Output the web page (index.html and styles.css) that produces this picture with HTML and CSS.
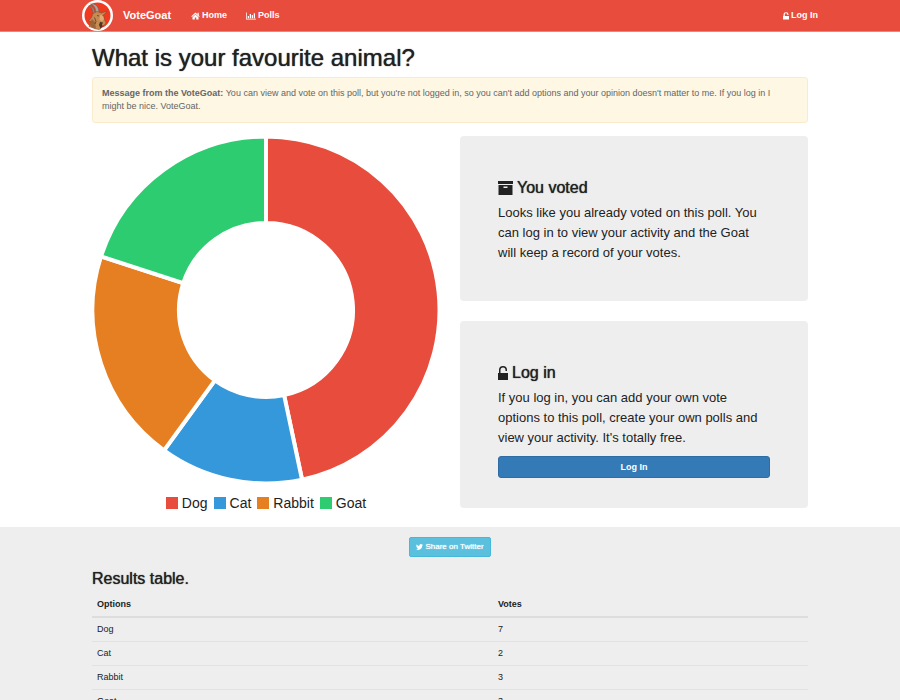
FILE: index.html
```html
<!DOCTYPE html>
<html lang="en">
<head>
<meta charset="utf-8">
<meta name="viewport" content="width=device-width, initial-scale=1">
<title>VoteGoat</title>
<link rel="stylesheet" href="styles.css">
</head>
<body>
<header class="navbar">
  <nav class="navbar-inner">
    <a class="brand" href="#">
      <svg class="logo" viewBox="0 0 62 62" aria-hidden="true">
        <circle cx="31" cy="31" r="28.5" fill="#f0391f" stroke="#fff" stroke-width="5"/>
        <path d="M26 26C25 16 20 11 13 12c7 2 8 8 10 17z" fill="#8d8a80" stroke="#6b5a4c"/>
        <path d="M34 24C33 12 27 7 17 8c8 3 10 8 11 17z" fill="#aaa698" stroke="#6b5a4c"/>
        <path d="M22 27l8-4 9 3 11-4-7 9 2 8 3 7-4 5-5 1-2 6-3 1-6-1-14-5 5-10-6-1 6-7z" fill="#c68a52" stroke="#7a4a2c"/>
        <path d="M15 49l5-11 6 6 2 13c-5 0-10-3-13-8z" fill="#9c6538"/>
        <path d="M36 31l5-2 3 9-4 5-5-4z" fill="#e0ab72"/>
        <path d="M36 44l6 1-2 4 1 4-4 4-3-7z" fill="#4d3328"/>
        <path d="M30 31l4 1M41 31l2-1M25 35l3 8-2 5" fill="none" stroke="#4d3328" stroke-width="1.500"/>
      </svg>
      <span>VoteGoat</span>
    </a>
    <a class="nav-link" href="#">
      <svg class="icon" viewBox="0 0 18 16" fill="currentColor" aria-hidden="true"><path d="M9 1l8.500 7.500-1.500 1.700L9 4 2 10.200.500 8.500z"/><path d="M13 1.500h2.500v5.500L13 4.500zM9 5l6 5.500V15h-4.500v-4h-3v4H3v-4.500z"/></svg>
      Home</a>
    <a class="nav-link" href="#">
      <svg class="icon icon-chart" viewBox="0 0 20 16" fill="currentColor" aria-hidden="true"><path d="M0 1h1.500v12.500H20V15H0zM3.500 8H6v4.500H3.500zM7.500 4H10v8.500H7.500zM11.500 6H14v6.500h-2.500zM15.500 2.500H18v10h-2.500z"/></svg>
      Polls</a>
    <a class="nav-link nav-login" href="#">
      <svg class="icon icon-lock" viewBox="0 0 12 16" fill="currentColor" aria-hidden="true"><path d="M1 8V5a5 4.500 0 0 1 10 0v1H8.500V5a2.500 2.500 0 0 0-5 0v3H12v7H0V8z"/></svg>
      Log In</a>
  </nav>
</header>

<main>
  <div class="container poll">
    <h1>What is your favourite animal?</h1>
    <p class="alert"><strong>Message from the VoteGoat:</strong> You can view and vote on this poll, but you're not logged in, so you can't add options and your opinion doesn't matter to me. If you log in I might be nice. VoteGoat.</p>
    <div class="columns">
      <figure class="chart">
        <svg class="donut" viewBox="0 0 348 348" role="img" aria-label="Poll results">
          <g stroke="#fff" stroke-width="4">
            <path fill="#e74c3c" d="M174 0.500A173.500 173.500 0 0 1 210.070 343.710L192.090 259.100A87 87 0 0 0 174 87z"/>
            <path fill="#3498db" d="M210.070 343.710A173.500 173.500 0 0 1 72.020 314.360L122.860 244.380A87 87 0 0 0 192.090 259.100z"/>
            <path fill="#e67e22" d="M72.020 314.360A173.500 173.500 0 0 1 8.990 120.390L91.260 147.120A87 87 0 0 0 122.860 244.380z"/>
            <path fill="#2ecc71" d="M8.990 120.390A173.500 173.500 0 0 1 174 0.500L174 87A87 87 0 0 0 91.260 147.120z"/>
          </g>
        </svg>
        <figcaption>
          <ul class="legend">
            <li><span class="swatch dog"></span>Dog</li>
            <li><span class="swatch cat"></span>Cat</li>
            <li><span class="swatch rabbit"></span>Rabbit</li>
            <li><span class="swatch goat"></span>Goat</li>
          </ul>
        </figcaption>
      </figure>
      <div class="side">
        <section class="panel">
          <h2><svg class="panel-icon" viewBox="0 0 15 14" fill="currentColor" aria-hidden="true"><path d="M0 0h15v3H0z"/><path fill-rule="evenodd" d="M0.500 4h14v10h-14zM5.500 5.500v1.500h4V5.500z"/></svg>You voted</h2>
          <p>Looks like you already voted on this poll. You can log in to view your activity and the Goat will keep a record of your votes.</p>
        </section>
        <section class="panel">
          <h2><svg class="panel-icon panel-lock" viewBox="0 0 10 14" fill="currentColor" aria-hidden="true"><path d="M1 7V4a4 4 0 0 1 8 0v1H7.500V4a2.500 2.500 0 0 0-5 0v3H10v7H0V7z"/></svg>Log in</h2>
          <p>If you log in, you can add your own vote options to this poll, create your own polls and view your activity. It's totally free.</p>
          <button class="btn btn-primary" type="button">Log In</button>
        </section>
      </div>
    </div>
  </div>

  <div class="results">
    <div class="container">
      <div class="share">
        <button class="btn btn-share" type="button"><svg class="bird" viewBox="0 0 24 20" fill="currentColor" aria-hidden="true"><path d="M24 2.400a10 10 0 0 1-2.800.8A5 5 0 0 0 23.300.5a10 10 0 0 1-3.100 1.200 4.900 4.900 0 0 0-8.400 4.500A14 14 0 0 1 1.700 1a4.900 4.900 0 0 0 1.500 6.600 5 5 0 0 1-2.200-.6 4.900 4.900 0 0 0 3.900 4.900 5 5 0 0 1-2.200.1 4.900 4.900 0 0 0 4.600 3.400A10 10 0 0 1 0 17.500 14 14 0 0 0 21.500 5 10 10 0 0 0 24 2.400z"/></svg>Share on Twitter</button>
      </div>
      <h2 id="results-title">Results table.</h2>
      <table aria-labelledby="results-title">
        <thead><tr><th scope="col">Options</th><th scope="col">Votes</th></tr></thead>
        <tbody>
          <tr><td>Dog</td><td>7</td></tr>
          <tr><td>Cat</td><td>2</td></tr>
          <tr><td>Rabbit</td><td>3</td></tr>
          <tr><td>Goat</td><td>3</td></tr>
        </tbody>
      </table>
    </div>
  </div>
</main>
</body>
</html>
```
FILE: styles.css
```css
* { box-sizing: border-box; }

body {
  margin: 0;
  background: #fff;
  color: #222;
  font: 9px/13px "Liberation Sans", Arial, sans-serif;
}

h1, h2, p, ul, figure { margin: 0; }

h1, h2 {
  font-weight: 400;
  text-shadow: 0 0 1px currentColor;
}

h1 { font-size: 24px; line-height: 30px; }
h2 { font-size: 16px; line-height: 20px; }

.container {
  max-width: 736px;
  margin: 0 auto;
  padding: 0 10px;
}

.navbar {
  background: #e74c3c;
  border-bottom: 1px solid #ef8579;
}

.navbar-inner {
  display: flex;
  align-items: center;
  max-width: 736px;
  margin: 0 auto;
}

.navbar a {
  display: flex;
  align-items: center;
  color: #fff;
  text-decoration: none;
}

.brand {
  gap: 10px;
  margin-right: 20px;
  font-size: 11px;
  font-weight: 700;
}

.logo { width: 31px; height: 31px; }

.nav-link {
  gap: 2px;
  margin-right: 19px;
  font-weight: 700;
}

.navbar .nav-login { margin: 0 0 0 auto; }

.icon { width: 9px; height: 8px; }
.icon-chart { width: 10px; }
.icon-lock { width: 6px; }

.poll { padding-top: 11px; padding-bottom: 14px; }

.alert {
  margin: 4px 0 13px;
  padding: 9px 20px 9px 9px;
  border: 1px solid #faebcc;
  border-radius: 3px;
  background: #fdf7e3;
  color: #666;
}

.columns {
  display: grid;
  grid-template-columns: 1fr 1fr;
  gap: 20px;
}

.donut { display: block; width: 100%; }

.legend {
  display: flex;
  justify-content: center;
  gap: 6px;
  margin-top: 9px;
  padding: 0;
  list-style: none;
  font-size: 14px;
  line-height: 20px;
}

.legend li { display: flex; align-items: center; gap: 4px; }

.swatch { width: 12px; height: 12px; }
.dog { background: #e74c3c; }
.cat { background: #3498db; }
.rabbit { background: #e67e22; }
.goat { background: #2ecc71; }

.side { display: grid; align-content: start; gap: 20px; }

.panel {
  padding: 42px 38px 30px;
  border-radius: 4px;
  background: #eee;
}

.panel h2 {
  display: flex;
  align-items: center;
  gap: 4px;
  margin-bottom: 5px;
}

.panel-icon { width: 15px; height: 14px; }
.panel-lock { width: 10px; }

.panel p {
  margin-bottom: 8px;
  padding-right: 6px;
  font-size: 13px;
  line-height: 20px;
}

.btn {
  border: 1px solid;
  border-radius: 3px;
  color: #fff;
  font: 700 9px/12px "Liberation Sans", Arial, sans-serif;
  cursor: pointer;
}

.btn-primary {
  display: block;
  width: 100%;
  padding: 4px;
  border-color: #2e6da4;
  background: #337ab7;
}

.btn-share {
  display: flex;
  align-items: center;
  gap: 2px;
  padding: 3px 6px;
  border-color: #46b8da;
  border-radius: 2px;
  background: #5bc0de;
  font-size: 8px;
  font-weight: 400;
  text-shadow: 0 0 1px #fff;
}

.bird { width: 7px; height: 6px; }

.results { padding: 10px 0 20px; background: #eee; }

.share { display: flex; justify-content: center; margin-bottom: 12px; }

table {
  width: 100%;
  margin-top: 4px;
  border-collapse: collapse;
  table-layout: fixed;
}

th, td { padding: 5px; text-align: left; }
th:first-child { width: 56%; }
th { border-bottom: 2px solid #ddd; }
td { border-top: 1px solid #e2e2e2; }
```
